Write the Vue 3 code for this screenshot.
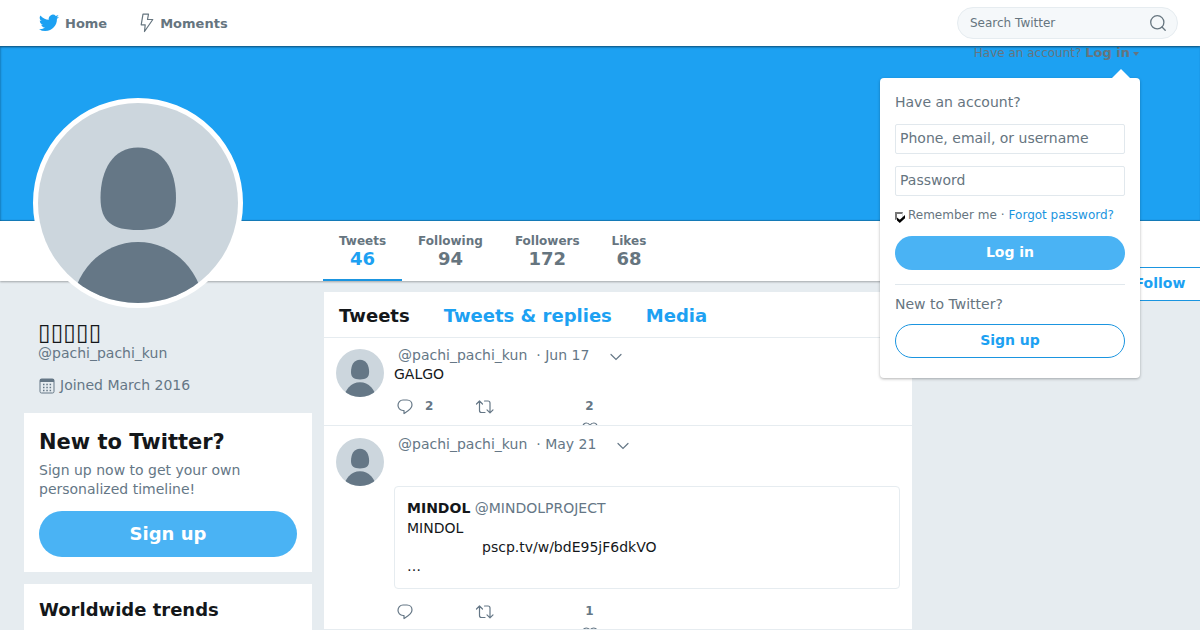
<script setup>
import { ref } from 'vue'

const search = ref('')
const username = ref('')
const password = ref('')
const remember = ref(true)

const stats = [
  { label: 'Tweets', value: '46', active: true },
  { label: 'Following', value: '94' },
  { label: 'Followers', value: '172' },
  { label: 'Likes', value: '68' },
]

const tweets = [
  { id: 1, date: 'Jun 17', text: 'GALGO', replies: '2', likes: '2' },
  { id: 2, date: 'May 21', quote: true, replies: '', likes: '1' },
]
</script>

<template>
  <div class="page">
    <header class="topbar">
      <nav class="topnav">
        <a href="#" class="navlink">
          <svg width="20" height="18" viewBox="0 0 24 20" aria-hidden="true">
            <path fill="#1da1f2" d="M24 2.4a9.800 9.800 0 0 1-2.800.8A4.900 4.900 0 0 0 23.300.5a9.900 9.900 0 0 1-3.100 1.200 4.900 4.900 0 0 0-8.400 4.500A14 14 0 0 1 1.700 1a4.900 4.900 0 0 0 1.500 6.600 4.900 4.900 0 0 1-2.200-.6 4.900 4.900 0 0 0 3.900 4.900 4.900 4.900 0 0 1-2.200.1 4.900 4.900 0 0 0 4.600 3.400A9.900 9.900 0 0 1 0 17.400 13.900 13.900 0 0 0 7.500 19.600c9.100 0 14.400-7.700 14-14.600A10 10 0 0 0 24 2.400z" />
          </svg>
          <span>Home</span>
        </a>
        <a href="#" class="navlink">
          <svg width="14" height="20" viewBox="0 0 14 20" fill="none" stroke="#66757f" stroke-width="1.200" stroke-linejoin="round" aria-hidden="true">
            <path d="M3 1.200h5.500L7.500 6.500H12.800L4.500 18.500 5.200 11.800H1.200z" />
          </svg>
          <span>Moments</span>
        </a>
      </nav>
      <form class="search" @submit.prevent>
        <input v-model="search" type="text" placeholder="Search Twitter" aria-label="Search Twitter" />
        <button type="submit" aria-label="Search">
          <svg width="16" height="16" viewBox="0 0 16 16" fill="none" stroke="#66757f" stroke-width="1.300" stroke-linecap="round">
            <circle cx="7.300" cy="7.300" r="6.600" />
            <path d="M12 12l3.200 3.200" />
          </svg>
        </button>
      </form>
    </header>

    <div class="cover">
      <a href="#" class="account">Have an account? <b>Log in</b><i class="caret"></i></a>
    </div>

    <section class="profilebar">
      <a v-for="s in stats" :key="s.label" href="#" class="stat" :class="{ active: s.active }">
        <span class="label">{{ s.label }}</span>
        <span class="value">{{ s.value }}</span>
      </a>
      <button type="button" class="follow">Follow</button>
      <svg class="portrait" viewBox="0 0 200 200" role="img" aria-label="Profile picture">
        <rect width="200" height="200" fill="#ccd6dd" />
        <path fill="#657786" d="M100 44.500C75 44.500 62.500 67 62.500 95c0 24 12 32 37.500 32s38-8 38-32c0-28-13-50.500-38-50.500z" />
        <ellipse cx="100" cy="208" rx="66" ry="69" fill="#657786" />
      </svg>
    </section>

    <div class="columns">
      <aside>
        <div class="bio">
          <h1>▯▯▯▯▯</h1>
          <a href="#" class="handle">@pachi_pachi_kun</a>
          <p class="joined">
            <svg width="16" height="16" viewBox="0 0 16 16" aria-hidden="true">
              <rect x="1" y="1" width="14" height="14" rx="1.500" fill="none" stroke="#657786" />
              <path d="M1 1h14v3H1z" fill="#657786" />
              <path d="M4 6.500h9M4 9.500h9M4 12.500h9" stroke="#657786" stroke-width="1.500" stroke-dasharray="1.500 1.800" />
            </svg>
            <span>Joined March 2016</span>
          </p>
        </div>
        <section class="card">
          <h2>New to Twitter?</h2>
          <p>Sign up now to get your own personalized timeline!</p>
          <button type="button" class="primary large">Sign up</button>
        </section>
        <section class="card trends">
          <h3>Worldwide trends</h3>
        </section>
      </aside>

      <main>
        <nav class="tabs">
          <span>Tweets</span>
          <a href="#">Tweets &amp; replies</a>
          <a href="#">Media</a>
        </nav>
        <article v-for="t in tweets" :key="t.id" class="tweet">
          <svg class="thumb" viewBox="0 0 200 200" aria-hidden="true">
            <rect width="200" height="200" fill="#ccd6dd" />
            <path fill="#657786" d="M100 44.500C75 44.500 62.500 67 62.500 95c0 24 12 32 37.500 32s38-8 38-32c0-28-13-50.500-38-50.500z" />
            <ellipse cx="100" cy="208" rx="66" ry="69" fill="#657786" />
          </svg>
          <div class="body">
            <div class="meta">
              <a href="#">@pachi_pachi_kun</a>
              <span class="date">· {{ t.date }}</span>
              <button type="button" aria-label="More">
                <svg width="12" height="8" viewBox="0 0 12 8" fill="none" stroke="#657786" stroke-width="1.200" stroke-linecap="round"><path d="M1 1.500l5 5 5-5" /></svg>
              </button>
            </div>
            <p v-if="t.text" class="text">{{ t.text }}</p>
            <div v-if="t.quote" class="quote">
              <p class="author"><b>MINDOL</b> <span class="gray">@MINDOLPROJECT</span></p>
              <p>MINDOL</p>
              <p class="link">pscp.tv/w/bdE95jF6dkVO</p>
              <p>…</p>
            </div>
            <div class="actions">
              <button type="button" aria-label="Reply">
                <svg width="16" height="16" viewBox="0 0 16 16" fill="none" stroke="#657786" stroke-width="1.200" stroke-linejoin="round"><path d="M6 1h4c3 0 5 2.300 5 5 0 4-4 6-8 8.500v-3H6C3 11.500 1 9 1 6.300S3 1 6 1z" /></svg>
                <span>{{ t.replies }}</span>
              </button>
              <button type="button" class="retweet" aria-label="Retweet">
                <svg width="20" height="16" viewBox="0 0 20 16" fill="none" stroke="#657786" stroke-width="1.200" stroke-linecap="round" stroke-linejoin="round"><path d="M1.500 5L4.500 2l3 3M4.500 2v9.500q0 2 2 2H10M9.500 2H13q2 0 2 2v9.500M12 10.800l3 3 3-3" /></svg>
              </button>
              <button type="button" class="like" aria-label="Like">
                <span>{{ t.likes }}</span>
                <svg width="16" height="15" viewBox="0 0 16 15" fill="none" stroke="#657786" stroke-width="1.200"><path d="M8 14C4 11 1 8 1 4.600 1 2.500 2.500 1 4.300 1 6 1 7.400 2 8 3.500 8.600 2 10 1 11.700 1 13.500 1 15 2.500 15 4.600 15 8 12 11 8 14z" /></svg>
              </button>
            </div>
          </div>
        </article>
      </main>
    </div>

    <section class="popup">
      <form @submit.prevent>
        <p>Have an account?</p>
        <input v-model="username" class="field" type="text" placeholder="Phone, email, or username" aria-label="Phone, email, or username" />
        <input v-model="password" class="field" type="password" placeholder="Password" aria-label="Password" />
        <div class="remember">
          <input id="remember" v-model="remember" type="checkbox" />
          <label for="remember">Remember me</label>
          <span>·</span>
          <a href="#">Forgot password?</a>
        </div>
        <button type="submit" class="primary">Log in</button>
      </form>
      <div class="signup">
        <p>New to Twitter?</p>
        <button type="button" class="outline">Sign up</button>
      </div>
    </section>
  </div>
</template>

<style>
body {
  margin: 0;
  background: #e6ecf0;
}
</style>

<style scoped>
.page {
  position: relative;
  height: 100vh;
  overflow: hidden;
  background: #e6ecf0;
  color: #14171a;
  font: 14px/19px "DejaVu Sans", sans-serif;
}
* {
  box-sizing: border-box;
}
h1, h2, h3, p {
  margin: 0;
}
a {
  color: inherit;
  text-decoration: none;
}
svg {
  display: block;
  flex: none;
}
button, input {
  font: inherit;
  color: inherit;
}
button {
  padding: 0;
  border: 0;
  background: none;
}

.topbar {
  position: relative;
  display: flex;
  align-items: center;
  justify-content: space-between;
  height: 46px;
  padding: 0 22px 0 39px;
  background: #fff;
  box-shadow: 0 1px 2px rgba(0, 0, 0, 0.5);
  color: #66757f;
}
.topnav {
  display: flex;
  gap: 33px;
}
.navlink {
  display: flex;
  align-items: center;
  gap: 6px;
  font-size: 13px;
  font-weight: bold;
}
.search {
  display: flex;
  align-items: center;
  width: 221px;
  height: 32px;
  padding: 0 11px 0 12px;
  border: 1px solid #e6ecf0;
  border-radius: 16px;
  background: #f5f8fa;
}
.search input {
  flex: 1;
  min-width: 0;
  padding: 0;
  border: 0;
  background: none;
  font-size: 12px;
}
input::placeholder {
  color: #66757f;
  opacity: 1;
}

.cover {
  display: flex;
  justify-content: flex-end;
  height: 175px;
  padding-right: 61px;
  background: #1da1f2;
  box-shadow: inset 1px 0 2px rgba(0, 0, 0, 0.2), inset 0 -1px 1px rgba(0, 0, 0, 0.2);
}
.account {
  height: 14px;
  color: #66757f;
  font-size: 12px;
  line-height: 14px;
}
.account b {
  font-size: 13px;
}
.caret {
  display: inline-block;
  margin-left: 3px;
  border: 3px solid transparent;
  border-top: 4px solid #66757f;
  border-bottom: 0;
  vertical-align: middle;
}

.profilebar {
  position: relative;
  display: flex;
  height: 60px;
  padding-left: 323px;
  background: #fff;
  box-shadow: 0 1px 2px rgba(0, 0, 0, 0.3);
  color: #66757f;
  font-weight: bold;
}
.stat {
  display: flex;
  flex-direction: column;
  align-items: center;
  padding: 12px 16px 0;
}
.stat.active {
  border-bottom: 2px solid #1b95e0;
}
.stat .label {
  font-size: 12px;
  line-height: 16px;
}
.stat .value {
  font-size: 18px;
  line-height: 20px;
}
.stat.active .value {
  color: #1da1f2;
}
.follow {
  position: absolute;
  top: 46px;
  right: -20px;
  width: 120px;
  height: 34px;
  padding-bottom: 2px;
  border: 1px solid #1b95e0;
  border-radius: 17px;
  background: #fff;
  color: #1da1f2;
  font-weight: bold;
}
.portrait {
  position: absolute;
  top: -123px;
  left: 33px;
  width: 210px;
  height: 210px;
  border: 5px solid #fff;
  border-radius: 50%;
  background: #fff;
}

.columns {
  display: grid;
  grid-template-columns: 288px 588px;
  gap: 12px;
  padding: 11px 24px 0;
}
.bio {
  padding: 28px 15px 18px 14px;
  color: #657786;
}
.bio h1 {
  color: #14171a;
  font-size: 23px;
  font-weight: normal;
  line-height: 24px;
}
.handle {
  display: block;
}
.joined {
  display: flex;
  align-items: center;
  gap: 5px;
  margin-top: 13px;
  padding-left: 1px;
}
.card {
  margin-bottom: 12px;
  padding: 15px;
  background: #fff;
}
.card h2 {
  font-size: 21px;
  line-height: 28px;
}
.card h3 {
  font-size: 18px;
  line-height: 22px;
}
.card p {
  margin: 5px 0 12px;
  color: #657786;
}
.trends {
  min-height: 200px;
}
.primary {
  display: block;
  width: 100%;
  height: 34px;
  padding-bottom: 2px;
  border-radius: 23px;
  background: #4ab3f4;
  color: #fff;
  font-weight: bold;
}
.primary.large {
  height: 46px;
  font-size: 18px;
}

main {
  background: #fff;
}
.tabs {
  display: flex;
  align-items: center;
  gap: 34px;
  height: 46px;
  padding: 2px 15px 0;
  border-bottom: 1px solid #e6ecf0;
  color: #1da1f2;
  font-size: 18px;
  font-weight: bold;
}
.tabs span {
  color: #14171a;
}
.tweet {
  display: flex;
  gap: 10px;
  padding: 8px 12px 0;
  border-bottom: 1px solid #e6ecf0;
}
.tweet + .tweet {
  padding-top: 9px;
}
.thumb {
  width: 48px;
  height: 48px;
  margin-top: 3px;
  border-radius: 50%;
}
.body {
  flex: 1;
}
.meta {
  display: flex;
  align-items: center;
  padding-left: 4px;
  color: #657786;
}
.meta button {
  padding-top: 2px;
}
.date {
  margin: 0 21px 0 9px;
}
.quote {
  margin-top: 32px;
  padding: 12px;
  border: 1px solid #e6ecf0;
  border-radius: 4px;
}
.quote .author {
  margin-bottom: 1px;
}
.quote .link {
  padding-left: 75px;
}
.gray {
  color: #657786;
}
.actions {
  display: flex;
  align-items: flex-start;
  height: 28px;
  margin-top: 13px;
  overflow: hidden;
  color: #657786;
  font-size: 12px;
  font-weight: bold;
}
.quote + .actions {
  height: 27px;
}
.actions button {
  display: flex;
  align-items: center;
  gap: 12px;
  min-width: 80px;
  min-height: 19px;
  padding-left: 3px;
}
.actions .retweet {
  padding-left: 1px;
}
.actions .like {
  flex-direction: column;
  gap: 6px;
  margin-left: -6px;
}

.popup {
  position: absolute;
  top: 78px;
  right: 60px;
  width: 260px;
  padding: 15px 15px 20px;
  border-radius: 4px;
  background: #fff;
  box-shadow: 0 1px 3px rgba(0, 0, 0, 0.3);
  color: #66757f;
}
.popup::before {
  content: "";
  position: absolute;
  top: -9px;
  right: 10px;
  border: 9px solid transparent;
  border-top: 0;
  border-bottom-color: #fff;
}
.field {
  display: block;
  width: 100%;
  height: 30px;
  margin-top: 12px;
  padding: 0 4px 2px;
  border: 1px solid #e1e8ed;
  border-radius: 2px;
}
.remember {
  display: flex;
  align-items: center;
  gap: 4px;
  margin: 10px 0 12px;
  font-size: 12px;
  line-height: 18px;
}
.remember a {
  color: #1b95e0;
}
.remember input {
  position: relative;
  appearance: none;
  width: 8px;
  height: 8px;
  margin: 2px 0 0;
  border: 1px solid #ddd;
  border-top: 2px solid #767676;
  border-left: 2px solid #767676;
}
.remember input + label {
  margin-left: 1px;
}
.remember input:checked::after {
  content: "";
  position: absolute;
  top: 1px;
  left: 0;
  width: 8px;
  height: 8px;
  background: #000;
  clip-path: polygon(0 30%, 35% 60%, 100% 0, 100% 40%, 35% 100%, 0 70%);
}
.signup {
  margin-top: 14px;
  padding-top: 10px;
  border-top: 1px solid #e1e8ed;
}
.outline {
  width: 100%;
  height: 34px;
  margin-top: 10px;
  padding-bottom: 2px;
  border: 1px solid #1b95e0;
  border-radius: 17px;
  color: #1da1f2;
  font-weight: bold;
}
</style>
